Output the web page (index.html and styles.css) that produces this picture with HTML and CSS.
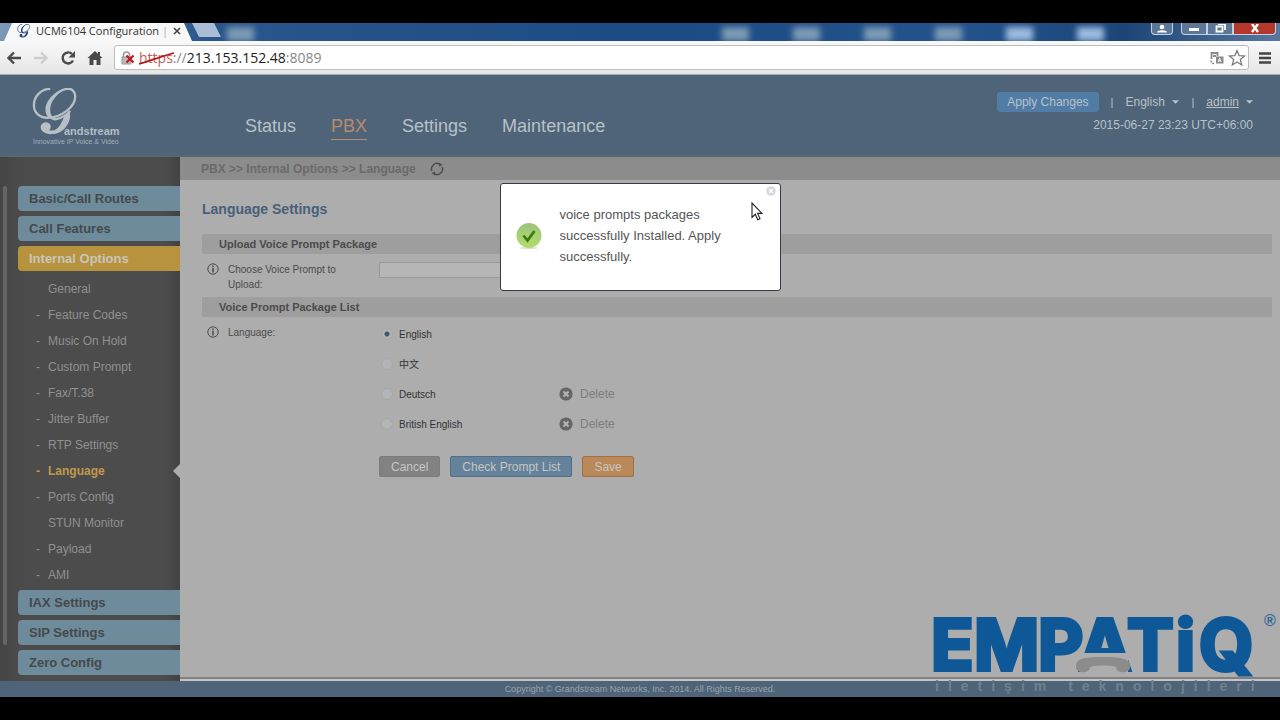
FILE: index.html
```html
<!DOCTYPE html>
<html lang="en">
<head>
<meta charset="utf-8">
<title>UCM6104 Configuration</title>
<link rel="stylesheet" href="styles.css">
</head>
<body>
<svg class="defs" aria-hidden="true">
  <symbol id="mark" viewBox="0 0 50 50">
    <path d="M19 1C9 1 2 9 2 18c0 8 6 13 14 13 15 0 29-12 29-22 0-6-4-9-9-8-9 1-18 12-19 21-1 8 4 12 10 10 5-1 9-4 13-8" fill="none" stroke="currentColor" stroke-width="2.4"/>
    <path d="M40 1c-10 0-21 10-21 22 0 7 4 9 9 8-7 3-14 0-14-8C14 11 28-1 40 1z" fill="currentColor"/>
    <path d="M39 25c3 6-3 22-17 23C14 49 9 45 9 41s5-7 9-4c3 3 1 6 0 7 9 2 12-6 16-15z" fill="currentColor"/>
  </symbol>
  <symbol id="info" viewBox="0 0 12 12">
    <circle cx="6" cy="6" r="5.2" fill="none" stroke="currentColor"/>
    <path d="M6 2.600v1.600M6 5v4.400" fill="none" stroke="currentColor" stroke-width="1.500"/>
  </symbol>
  <symbol id="cross" viewBox="0 0 14 14">
    <circle cx="7" cy="7" r="6.6" fill="currentColor"/>
    <path d="M4.5 4.5l5 5M9.5 4.5l-5 5" stroke="#b4b4b4" stroke-width="2"/>
  </symbol>
  <symbol id="caret" viewBox="0 0 8 4"><path d="M0 0h8L4 4z" fill="currentColor"/></symbol>
</svg>

<div class="tabstrip">
  <div class="tab">
    <svg class="tab-icon"><use href="#mark"/></svg>
    <span class="tab-title">UCM6104 Configuration <i>|</i></span>
    <button class="tab-close" aria-label="Close tab"><svg viewBox="0 0 8 8"><path d="M1 1l6 6M7 1L1 7" stroke="#444" stroke-width="1.6"/></svg></button>
  </div>
  <button class="new-tab" aria-label="New tab"></button>
  <div class="desktop" aria-hidden="true"><i></i><i></i><i></i><i></i><i></i><i></i><i></i></div>
  <div class="window-buttons">
    <button class="user" aria-label="User"><svg viewBox="0 0 14 10"><circle cx="7" cy="3" r="2.3" fill="#fff"/><path d="M2 8.5c0-3 10-3 10 0z" fill="#fff"/></svg></button>
    <button class="min" aria-label="Minimize"><svg viewBox="0 0 14 10"><path d="M2 4h10v3H2z" fill="#fff"/></svg></button>
    <button class="max" aria-label="Restore"><svg viewBox="0 0 14 10"><path d="M5 0h7v6M3.5 2.500h6v5h-6z" fill="none" stroke="#fff" stroke-width="1.800"/></svg></button>
    <button class="close" aria-label="Close"><svg viewBox="0 0 14 10"><path d="M4 0l6 8M10 0L4 8" stroke="#fff" stroke-width="2.400"/></svg></button>
  </div>
</div>

<div class="toolbar">
  <button aria-label="Back"><svg viewBox="0 0 16 16"><path d="M15 8H3M8 2.500L2.500 8 8 13.500" fill="none" stroke="#4a4a4a" stroke-width="2.400"/></svg></button>
  <button aria-label="Forward"><svg viewBox="0 0 16 16"><path d="M1 8h12M8 2.500L13.500 8 8 13.500" fill="none" stroke="#cdcdcd" stroke-width="2.400"/></svg></button>
  <button aria-label="Reload"><svg viewBox="0 0 16 16"><path d="M13 10.500A5.500 5.500 0 1 1 12 4" fill="none" stroke="#4a4a4a" stroke-width="2.400"/><path d="M15 1v6.500H8.500z" fill="#4a4a4a"/></svg></button>
  <button aria-label="Home"><svg viewBox="0 0 16 16"><path d="M8 1l3 2.700V2h2v3.700L15.500 8H13.500v7H9.500v-5h-3v5H2.500V8H.5z" fill="#4a4a4a"/></svg></button>
  <div class="address">
    <svg class="lock" viewBox="0 0 14 14"><path d="M2.500 6V4a3 3 0 0 1 6 0v2" fill="none" stroke="#999" stroke-width="1.600"/><path d="M1 6h9v7H1z" fill="#bbb" stroke="#999"/><path d="M5.500 4.500l7 7M12.500 4.500l-7 7" stroke="#c4161c" stroke-width="2.200"/></svg>
    <span class="url"><span class="scheme">https<svg viewBox="0 0 36 14"><path d="M0 12C11 9 20 5 35 1" fill="none" stroke="#b01818" stroke-width="1.800"/></svg></span><span class="dim">://</span>213.153.152.48<span class="dim">:8089</span></span>
    <svg class="translate" viewBox="0 0 14 14"><path d="M1.500 8V2h6v3M3 5h3" fill="none" stroke="#888" stroke-width="1.800"/><path d="M6 5.500h7.500v7H6z" fill="#888"/><path d="M8.200 11l1.500-4 1.500 4M8.700 9.800h2" fill="none" stroke="#fff"/><path d="M1 9.500c0 2 1 3 3 3" fill="none" stroke="#888" stroke-width="1.400" stroke-dasharray="2 1"/></svg>
    <svg class="star" viewBox="0 0 18 18"><path d="M9 1.500l2.100 5.100 5.400.4-4.200 3.500 1.400 5.400L9 13l-4.700 2.900 1.400-5.400L1.500 7l5.400-.4z" fill="#fff" stroke="#777" stroke-width="1.200"/></svg>
  </div>
  <button class="menu-button" aria-label="Menu"><svg viewBox="0 0 16 16"><path d="M2 3.500h12M2 8h12M2 12.500h12" stroke="#444" stroke-width="2.600"/></svg></button>
</div>

<header class="site-header">
  <svg class="logo" viewBox="0 0 90 60" role="img" aria-label="Grandstream">
    <use href="#mark" x="0" y="3" width="48" height="48"/>
    <text x="32" y="50" class="logo-name">andstream</text>
    <text x="1" y="59" class="logo-tag">Innovative IP Voice &amp; Video</text>
  </svg>
  <nav class="main-nav">
    <a href="#">Status</a>
    <a href="#" class="active">PBX</a>
    <a href="#">Settings</a>
    <a href="#">Maintenance</a>
  </nav>
  <div class="account">
    <div class="account-row">
      <button class="apply">Apply Changes</button>
      <span class="bar">|</span>
      <label class="lang"><select aria-label="Interface language"><option>English</option></select><svg class="caret"><use href="#caret"/></svg></label>
      <span class="bar">|</span>
      <button class="admin"><u>admin</u><svg class="caret"><use href="#caret"/></svg></button>
    </div>
    <time>2015-06-27 23:23 UTC+06:00</time>
  </div>
</header>

<div class="main">
  <aside class="sidebar">
    <div class="rail"></div>
    <nav class="menu">
      <a class="group" href="#">Basic/Call Routes</a>
      <a class="group" href="#">Call Features</a>
      <a class="group open" href="#">Internal Options</a>
      <ul class="sub">
        <li class="plain"><a href="#">General</a></li>
        <li><a href="#">Feature Codes</a></li>
        <li><a href="#">Music On Hold</a></li>
        <li><a href="#">Custom Prompt</a></li>
        <li><a href="#">Fax/T.38</a></li>
        <li><a href="#">Jitter Buffer</a></li>
        <li><a href="#">RTP Settings</a></li>
        <li class="current"><a href="#">Language</a></li>
        <li><a href="#">Ports Config</a></li>
        <li class="plain"><a href="#">STUN Monitor</a></li>
        <li><a href="#">Payload</a></li>
        <li><a href="#">AMI</a></li>
      </ul>
      <a class="group" href="#">IAX Settings</a>
      <a class="group" href="#">SIP Settings</a>
      <a class="group" href="#">Zero Config</a>
    </nav>
  </aside>

  <main class="content">
    <div class="crumbs">
      <span>PBX &gt;&gt; Internal Options &gt;&gt; Language</span>
      <button aria-label="Refresh"><svg viewBox="0 0 14 14"><path d="M1.800 9A5.600 5.600 0 0 1 10 2.300M12.200 5A5.600 5.600 0 0 1 4 11.700" fill="none" stroke="#4c4c4c" stroke-width="1.500"/><path d="M9 .5l3.500 2.500L9 4.500zM5 13.500L1.500 11 5 9.500z" fill="#4c4c4c"/></svg></button>
    </div>
    <form class="settings">
      <h1>Language Settings</h1>
      <h2>Upload Voice Prompt Package</h2>
      <div class="row">
        <svg class="info"><use href="#info"/></svg>
        <label for="file">Choose Voice Prompt to Upload:</label>
        <input class="file" id="file" type="text">
      </div>
      <h2>Voice Prompt Package List</h2>
      <div class="row" role="radiogroup" aria-labelledby="lang-label">
        <svg class="info"><use href="#info"/></svg>
        <span id="lang-label">Language:</span>
        <div class="options">
          <div class="option"><label><input type="radio" name="lang" checked>English</label></div>
          <div class="option"><label><input type="radio" name="lang">中文</label></div>
          <div class="option"><label><input type="radio" name="lang">Deutsch</label><button type="button" class="delete"><svg><use href="#cross"/></svg>Delete</button></div>
          <div class="option"><label><input type="radio" name="lang">British English</label><button type="button" class="delete"><svg><use href="#cross"/></svg>Delete</button></div>
        </div>
      </div>
      <div class="actions">
        <button type="button" class="btn cancel">Cancel</button>
        <button type="button" class="btn check">Check Prompt List</button>
        <button type="button" class="btn save">Save</button>
      </div>
    </form>
  </main>
</div>

<footer class="site-footer">Copyright © Grandstream Networks, Inc. 2014. All Rights Reserved.</footer>

<div class="dialog" role="dialog" aria-label="Message">
  <svg class="ok" viewBox="0 0 26 26"><defs><linearGradient id="g" x1="0" y1="0" x2="0" y2="1"><stop offset="0" stop-color="#9cc47c"/><stop offset="1" stop-color="#b4dc6c"/></linearGradient></defs><ellipse cx="13" cy="25" rx="9" ry="1" fill="#ddd"/><circle cx="13" cy="12.500" r="12.500" fill="url(#g)"/><path d="M7.500 12.500l4 5L18.500 8" fill="none" stroke="#3b7d12" stroke-width="2.800"/></svg>
  <p>voice prompts packages successfully Installed. Apply successfully.</p>
  <button class="dialog-close" aria-label="Close"><svg viewBox="0 0 10 10"><circle cx="5" cy="5" r="4.800" fill="#d9d9d9"/><path d="M3.200 3.200l3.600 3.600M6.800 3.200L3.200 6.800" stroke="#fff" stroke-width="1.300"/></svg></button>
  <svg class="pointer" viewBox="0 0 12 19"><path d="M1 1v14.500l3.300-3.200 2.400 5.400 2.300-1-2.400-5.300H11z" fill="#fff" stroke="#222" stroke-width="1.100"/></svg>
</div>

<svg class="watermark" viewBox="0 0 350 90">
  <text class="wm-name" y="61"><tspan x="1">E</tspan><tspan x="44">M</tspan><tspan x="108">P</tspan><tspan x="149">A</tspan><tspan x="197">T</tspan><tspan x="246">i</tspan><tspan x="269">Q</tspan></text>
  <path class="wm-gap" d="M150 44h48v20h-48z"/>
  <path d="M146 58c0-8 6-10 27-10s27 2 27 10c0 7-14 7-14 0-4-2-22-2-26 0 0 7-14 7-14 0z" fill="#8c8c8c"/>
  <text class="wm-reg" x="334" y="17">®</text>
  <text class="wm-tag" x="5" y="82">iletişim teknolojileri</text>
</svg>
</body>
</html>
```
FILE: styles.css
```css
* { box-sizing: border-box; }
body {
  margin: 0;
  padding: 23px 0;
  min-height: 100vh;
  display: flex;
  flex-direction: column;
  position: relative;
  background: #000;
  font: 12px/16px "Liberation Sans", "Noto Sans CJK SC", sans-serif;
  color: #4b4b4b;
}
button {
  border: 0;
  padding: 0;
  background: none;
  font: inherit;
  color: inherit;
}
a { color: inherit; text-decoration: none; }
svg { display: block; }
.defs { position: absolute; width: 0; height: 0; }

/* Browser frame */
.tabstrip {
  display: flex;
  height: 18px;
  padding-left: 4px;
  background: linear-gradient(90deg, #7d97b8 0, #2a568c 16%, #1c4b83 50%, #24538c 75%, #1c4577 88%, #5878a0 100%);
  overflow: hidden;
}
.tab {
  display: flex;
  align-items: center;
  gap: 5px;
  width: 188px;
  padding: 0 0 3px 13px;
  background: #f8f8f8;
  clip-path: polygon(0 100%, 8px 0, 180px 0, 188px 100%);
}
.tab-icon { flex: none; width: 14px; height: 14px; color: #24437c; }
.tab-title {
  font: 11px/16px "Open Sans", sans-serif;
  color: #333;
  white-space: nowrap;
}
.tab-title i { font-style: normal; color: #aaa; }
.tab-close svg { width: 8px; height: 8px; }
.new-tab {
  width: 29px;
  height: 14px;
  background: #a9bdd6;
  clip-path: polygon(0 0, 22px 0, 29px 100%, 7px 100%);
}
.desktop {
  flex: 1;
  display: flex;
  justify-content: flex-end;
  align-items: flex-end;
  gap: 44px;
  padding: 0 47px 0 6px;
  filter: blur(3px);
}
.desktop i { width: 27px; height: 14px; background: #9dbbe0; }
.desktop i:nth-child(-n+5) { background: #7c9ab4; }
.desktop i:first-child { margin-right: auto; }
.window-buttons { display: flex; align-items: flex-start; padding-right: 4px; }
.window-buttons button {
  display: grid;
  place-items: center;
  width: 26px;
  height: 12px;
  border: 1px solid #c3d0e0;
  border-top: 0;
  background: #5c7797;
}
.window-buttons svg { width: 14px; height: 10px; }
.window-buttons .user { width: 22px; margin-right: 8px; border-radius: 0 0 4px 4px; }
.window-buttons .min { border-radius: 0 0 0 4px; }
.window-buttons .close { width: 43px; background: #b5382c; border-radius: 0 0 4px 0; }
.toolbar {
  display: flex;
  align-items: center;
  gap: 11px;
  height: 34px;
  padding: 0 7px 0 6px;
  background: linear-gradient(#f8f8f8, #e6e6e6);
  border-bottom: 1px solid #a9a9a9;
}
.toolbar button svg { width: 16px; height: 16px; }
.toolbar .menu-button { margin-left: -3px; }
.address {
  flex: 1;
  display: flex;
  align-items: center;
  gap: 4px;
  height: 25px;
  padding: 0 2px 0 6px;
  background: #fff;
  border: 1px solid #bdbdbd;
  border-radius: 3px;
}
.address svg { width: 14px; height: 14px; }
.address .star { width: 18px; height: 18px; }
.url { flex: 1; font: 14px/20px "Open Sans", sans-serif; color: #222; }
.dim { color: #888; }
.scheme { position: relative; color: #c06058; }
.address .scheme svg { position: absolute; left: 0; top: 4px; width: 36px; height: 14px; }

/* Application header */
.site-header {
  display: flex;
  height: 82px;
  padding: 10px 27px 0 32px;
  background: #4f6478;
  border-bottom: 2px solid #566672;
  color: #b9c1c8;
}
.logo { width: 90px; height: 60px; overflow: visible; color: #b6bfc6; fill: #b6bfc6; }
.logo-name { font: bold 11px "Liberation Sans", sans-serif; }
.logo-tag { font: 7px "Liberation Sans", sans-serif; fill: #a3afb9; }
.main-nav {
  flex: 1;
  display: flex;
  align-items: flex-start;
  gap: 35px;
  padding: 29px 0 0 123px;
  font-size: 18px;
  line-height: 24px;
}
.main-nav .active { padding-bottom: 1px; color: #b98b6c; border-bottom: 1px solid #b98b6c; }
.account { display: flex; flex-direction: column; align-items: flex-end; gap: 5px; padding-top: 7px; }
.account-row { display: flex; align-items: center; gap: 12px; }
.apply {
  height: 20px;
  padding: 0 10px;
  border-radius: 3px;
  background: #507ca6;
}
.bar { font-size: 11px; }
.lang, .admin { display: flex; align-items: center; gap: 7px; }
.lang select {
  appearance: none;
  border: 0;
  padding: 0;
  background: none;
  font: inherit;
  color: inherit;
}
.caret { width: 7px; height: 4px; }

/* Body */
.main { flex: 1; display: flex; }
.sidebar {
  display: flex;
  gap: 11px;
  width: 180px;
  padding: 29px 0 5px 3px;
  background: linear-gradient(90deg, #454545, #4c4c4c 25px, #4c4c4c 165px, #424242);
}
.rail { width: 4px; margin-bottom: 31px; background: #656565; border-radius: 2px; }
.menu { flex: 1; display: flex; flex-direction: column; gap: 5px; }
.group {
  height: 25px;
  padding-left: 11px;
  border-radius: 4px 0 0 4px;
  background: #6e8b9b;
  color: #45494c;
  font: bold 13px/25px "Liberation Sans", sans-serif;
}
.group.open { background: #b8933e; color: #c9c5bb; }
.sub { margin: 0 0 -3px; padding: 0; list-style: none; color: #909090; }
.sub li {
  position: relative;
  display: flex;
  align-items: center;
  height: 26px;
  padding-left: 18px;
}
.sub li::before { content: "-"; width: 12px; }
.sub .plain::before { content: ""; }
.sub .current { color: #c09a4c; font-weight: bold; }
.sub .current::after {
  content: "";
  position: absolute;
  right: 0;
  border: 7px solid transparent;
  border-left: 0;
  border-right-color: #adadad;
}
.content { flex: 1; background: #adadad; border-bottom: 2px solid #c4c4c4; box-shadow: inset 0 -2px #808080; }
.crumbs {
  display: flex;
  align-items: center;
  gap: 14px;
  height: 23px;
  padding-left: 21px;
  background: #8c8c8c;
  color: #6a6a6a;
  font-weight: bold;
}
.crumbs svg { width: 14px; height: 14px; }
.settings { padding: 17px 8px 0 22px; }
h1 { margin: 0 0 13px; font-size: 14px; line-height: 24px; color: #47607a; }
h2 {
  margin: 0;
  padding-left: 17px;
  background: #9e9e9e;
  font-size: 11px;
  line-height: 20px;
}
.row {
  display: grid;
  grid-template-columns: 21px 151px 1fr;
  align-items: start;
  padding: 8px 0 5px 5px;
  font-size: 10px;
  line-height: 15px;
}
.row label[for] { padding-right: 30px; }
.info { width: 12px; height: 12px; margin-top: 1px; }
.file { width: 240px; height: 16px; border: 1px solid #999; background: #b6b6b6; }
.options { display: flex; flex-direction: column; gap: 14px; padding-top: 1px; }
.option { display: flex; height: 16px; align-items: center; }
.option label { display: flex; align-items: center; gap: 6px; width: 180px; padding-left: 2px; color: #333; }
.option input {
  appearance: none;
  width: 12px;
  height: 12px;
  margin: 0;
  border: 1px solid #a7a7a7;
  border-radius: 50%;
  background: #b4b4b4;
}
.option input:checked { background: radial-gradient(circle, #41566b 2px, #b4b4b4 3px); }
.delete { display: flex; align-items: center; gap: 7px; font-size: 12px; line-height: 16px; color: #7d7d7d; }
.delete svg { width: 14px; height: 14px; color: #666; }
.actions { display: flex; gap: 10px; padding: 19px 0 0 177px; }
.btn {
  height: 21px;
  padding: 0 11px;
  border: 1px solid #7c7c7c;
  border-radius: 2px;
  background: #828282;
  color: #c6c6c6;
}
.check { background: #648299; border-color: #4d708b; }
.save { background: #b9895a; border-color: #a1703f; }
.site-footer {
  height: 16px;
  background: #4f6478;
  color: #98a3ad;
  font-size: 9px;
  line-height: 16px;
  text-align: center;
}

/* Layers above the page */
.dialog {
  position: absolute;
  top: 183px;
  left: 0;
  right: 0;
  width: 281px;
  margin: 0 auto;
  padding: 20px 40px 23px 15px;
  display: flex;
  align-items: center;
  gap: 18px;
  border: 1px solid #343b46;
  border-radius: 3px;
  background: #fff;
}
.dialog p { flex: 1; margin: 0; font-size: 13px; line-height: 21px; color: #555; }
.ok { width: 26px; height: 26px; flex: none; }
.dialog-close { position: absolute; top: 2px; right: 4px; }
.dialog-close svg { width: 10px; height: 10px; }
.pointer { position: absolute; top: 18px; right: 17px; width: 12px; height: 19px; }
.watermark { position: absolute; right: 0; bottom: 21px; width: 350px; height: 90px; }
.wm-name {
  font: bold 70px Inter, "Liberation Sans", sans-serif;
  fill: #0f5898;
  stroke: #0f5898;
  stroke-width: 4px;
}
.wm-gap { fill: #adadad; }
.wm-reg { font: bold 16px "Liberation Sans", sans-serif; fill: #2c6699; }
.wm-tag { font: bold 14px "Liberation Sans", sans-serif; fill: #71808d; letter-spacing: 9px; }
```
